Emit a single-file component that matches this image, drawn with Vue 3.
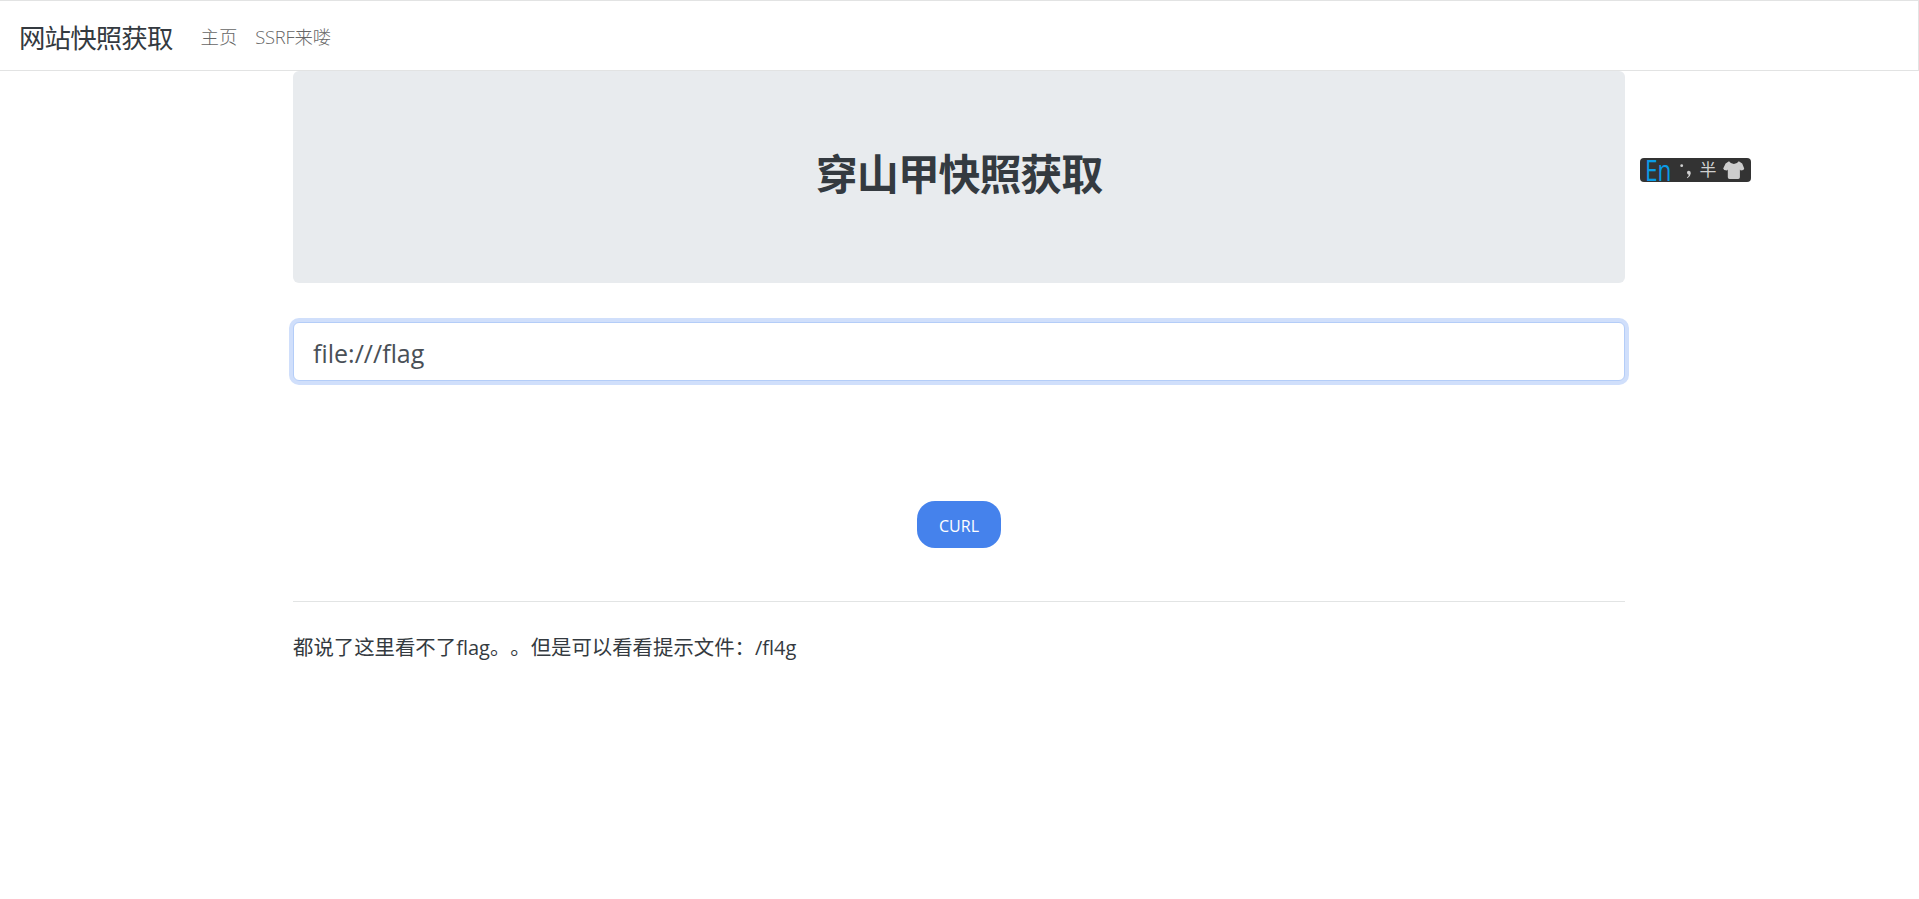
<template>
  <div class="page">
    <nav class="navbar">
      <a class="navbar-brand">网站快照获取</a>
      <a class="nav-link home">主页</a>
      <a class="nav-link"><span class="latin">SSRF</span>来喽</a>
    </nav>

    <main class="container">
      <header class="jumbotron">
        <h1>穿山甲快照获取</h1>
      </header>

      <form class="form" @submit.prevent>
        <input v-model="url" class="form-control" type="text" spellcheck="false" />
        <button class="btn" type="submit">CURL</button>
      </form>

      <hr />
      <p class="result">都说了这里看不了<span class="latin">flag</span>。。但是可以看看提示文件：<span class="latin">/fl4g</span></p>
    </main>

    <!-- Floating input method bar -->
    <div class="ime">
      <span class="ime-lang">En</span>
      <svg width="111" height="24" viewBox="0 0 111 24">
        <circle cx="41.7" cy="7.7" r="1.4" fill="#d0d0d0" />
        <path d="M47 14.6 a1.8 1.8 0 0 1 1.9 -1.9 q2 0 1.9 2.5 q-.2 3.2 -3.4 5 l-.5 -.8 q1.7 -1.1 2 -2.7 q-1.8 .2 -1.9 -2.1z" fill="#d0d0d0" />
        <path d="M89 3.3 L85.6 5.4 L83.2 10.6 L84.2 12 L87 12.6 L87.8 11.6 V19.2 Q87.8 21 89.5 21 H98.2 Q99.9 21 99.9 19.2 V11.6 L100.8 12.6 L103.4 12 L104.2 10.6 L102.2 5.4 L98.8 3.3 Q97 6 93.9 6 Q90.8 6 89 3.3z" fill="#cdcdcd" />
      </svg>
      <span class="ime-half">半</span>
    </div>
  </div>
</template>

<script setup>
import { ref } from 'vue'

const url = ref('file:///flag')
</script>

<style>
  body {
    background: #fff;
  }
</style>

<style scoped>
  .page {
    min-height: 899px;
    color: #343a40;
    font-family: 'Open Sans', 'Noto Sans CJK SC', sans-serif;
    text-spacing-trim: space-all;
  }

  /* Navbar */
  .navbar {
    box-sizing: border-box;
    height: 71px;
    display: flex;
    align-items: center;
    padding: 2px 19px 0;
    border: 1px solid #e2e3e3;
    border-left: 0;
  }

  .navbar-brand {
    padding-top: 2px;
    font-size: 26.4px;
    letter-spacing: -0.8px;
    line-height: 38px;
    margin-right: 28px;
  }

  .nav-link {
    font-size: 18.4px;
    font-weight: 300;
    line-height: 28px;
    color: #666;
  }

  .home {
    margin-right: 18px;
  }

  .nav-link .latin {
    letter-spacing: -0.3px;
  }

  .container {
    width: 1332px;
    margin: 0 auto 0 293px;
  }

  /* Header block */
  .jumbotron {
    height: 212px;
    display: flex;
    justify-content: center;
    background: #e8ebee;
    border-radius: 6px;
  }

  h1 {
    margin: 74px 0 0;
    font-size: 42px;
    font-weight: 700;
    letter-spacing: -1.1px;
    line-height: 58px;
  }

  /* Form */
  .form {
    display: flex;
    flex-direction: column;
    align-items: center;
    padding-top: 39px;
  }

  .form-control {
    box-sizing: border-box;
    width: 100%;
    height: 59px;
    padding: 3px 19px 0;
    border: 1px solid #b4cdf8;
    border-radius: 6px;
    outline: none;
    box-shadow: 0 0 0 4px #d0dffb;
    background: #fff;
    color: #495057;
    font-family: 'Open Sans', sans-serif;
    font-size: 25px;
  }

  .btn {
    width: 84px;
    height: 47px;
    margin-top: 120px;
    padding: 3px 0 0;
    border: 0;
    border-radius: 18px;
    background: #4582ec;
    color: #fff;
    font-family: 'Open Sans', sans-serif;
    font-size: 16px;
  }

  hr {
    margin: 53px 0 0;
    border: 0;
    border-top: 1px solid #e2e4e4;
  }

  .result {
    margin: 30px 0 0;
    font-size: 20.4px;
    line-height: 30px;
  }

  .result .latin {
    font-size: 20px;
  }

  /* Input method bar */
  .ime {
    position: absolute;
    left: 1640px;
    top: 158px;
    width: 111px;
    height: 24px;
    border-radius: 4px;
    background: #333;
  }

  .ime-lang {
    position: absolute;
    left: 4.5px;
    top: -1px;
    color: #0a9ce6;
    font-size: 29px;
    line-height: 25px;
    transform: scaleX(0.78);
    transform-origin: left center;
  }

  .ime-half {
    position: absolute;
    left: 59.5px;
    top: 0;
    color: #d0d0d0;
    font-size: 17px;
    line-height: 24px;
  }
</style>
